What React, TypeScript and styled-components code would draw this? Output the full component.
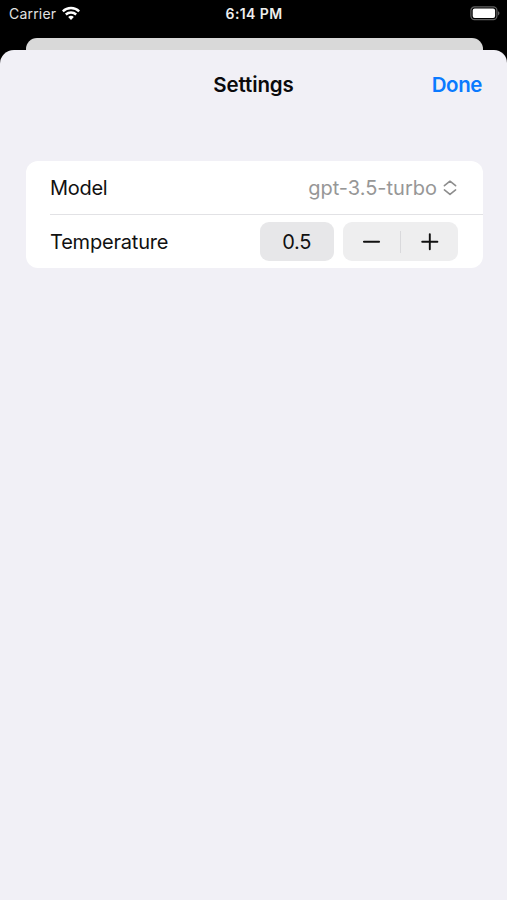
import React, { useState } from "react";
import styled, { createGlobalStyle } from "styled-components";

const GlobalStyle = createGlobalStyle`
  * { box-sizing: border-box; }
  body { margin: 0; background: #000; font-family: Inter, "Liberation Sans", sans-serif; }
  button { font: inherit; border: 0; padding: 0; margin: 0; background: none; color: inherit; letter-spacing: inherit; }
`;

const Screen = styled.main`
  height: 900px;
  display: flex;
  flex-direction: column;
  background: #000;
  overflow: hidden;
`;

const StatusBar = styled.header`
  height: 38px;
  flex: none;
  display: grid;
  grid-template-columns: 1fr auto 1fr;
  align-items: start;
  padding: 5px 7px 0 9px;
  color: #fff;
  font-size: 14px;
  line-height: 18px;
`;

const Carrier = styled.div`
  display: flex;
  gap: 5.8px;
  color: #e2e2e2;
  letter-spacing: 0.2px;
  svg { margin-top: 0.5px; }
`;

const Time = styled.div`
  font-weight: 600;
  color: #eee;
  letter-spacing: 0.4px;
  margin-right: 1px;
`;

const Battery = styled.svg`
  justify-self: end;
  margin-top: 1px;
`;

const BackSheet = styled.div`
  height: 12px;
  flex: none;
  margin: 0 24.5px 0 25.5px;
  border-radius: 11px 11px 0 0;
  background: #d9d9d9;
`;

const Sheet = styled.section`
  flex: 1;
  border-radius: 14px 13px 0 0;
  background: #f1f0f6;
`;

const NavBar = styled.div`
  height: 69px;
  display: grid;
  grid-template-columns: 1fr auto 1fr;
  align-items: center;
  padding: 0 25px;
  font-size: 20.5px;
  font-weight: 600;
`;

const Title = styled.h1`
  grid-column: 2;
  margin: 0;
  font: inherit;
  color: #0a0a0c;
  letter-spacing: -0.1px;
`;

const DoneButton = styled.button`
  justify-self: end;
  color: #0a7aff;
  letter-spacing: -0.4px;
`;

const Card = styled.div`
  height: 107px;
  margin: 42px 24px 0 25.5px;
  border-radius: 12px;
  background: #fff;
  color: #111;
  font-size: 20px;
`;

const Row = styled.div<{ $divided?: boolean }>`
  height: ${(p) => (p.$divided ? 54 : 53)}px;
  margin-left: 24.5px;
  padding-right: 25px;
  display: flex;
  align-items: center;
  justify-content: space-between;
  border-bottom: ${(p) => (p.$divided ? "1px solid #e2e2e5" : "0")};
`;

const Label = styled.span<{ $spacing: number }>`
  padding-top: 1px;
  letter-spacing: ${(p) => p.$spacing}px;
`;

const Picker = styled.button`
  display: flex;
  align-items: center;
  gap: 6px;
  color: #979797;
  svg { margin-right: 1px; }
`;

const Controls = styled.div`
  display: flex;
  gap: 9.5px;
`;

const ValueButton = styled.button`
  width: 73.5px;
  height: 39px;
  border-radius: 9px;
  background: #e7e7e9;
  letter-spacing: -0.2px;
`;

const Stepper = styled.div`
  width: 115px;
  height: 39px;
  display: grid;
  grid-template-columns: 1fr 1px 1fr;
  align-items: center;
  border-radius: 9px;
  background: #eeeeef;
`;

const StepButton = styled.button`
  height: 39px;
  display: flex;
  align-items: center;
  justify-content: center;
`;

const StepDivider = styled.span`
  height: 22px;
  background: #d9d9dc;
`;

const WifiIcon = () => (
  <svg width="18" height="15" viewBox="0 0 18 15" fill="none" stroke="#fff" strokeWidth="2.4">
    <path d="M.8 5.3C5.3.9 12.7.9 17.2 5.3" />
    <path d="M3.8 8.5C6.8 5.8 11.2 5.8 14.2 8.5" />
    <path d="M6.2 10.9C7.7 9.3 10.3 9.3 11.8 10.9L9 13.9Z" fill="#fff" stroke="none" />
  </svg>
);

const BatteryIcon = () => (
  <Battery width="30" height="15" viewBox="0 0 30 15">
    <rect x=".9" y=".9" width="26" height="12.8" rx="3.6" fill="#000" stroke="#626262" strokeWidth="1.2" />
    <rect x="2.7" y="2.6" width="22.4" height="9.4" rx="2" fill="#fff" />
    <path d="M28.2 5.2C29.8 5.8 29.8 8.8 28.2 9.4Z" fill="#777" />
  </Battery>
);

const ChevronsIcon = () => (
  <svg width="14" height="16" viewBox="0 0 14 16" fill="none" stroke="#8d8d8d" strokeWidth="1.6" strokeLinecap="round" strokeLinejoin="round">
    <path d="M1.4 5.7L7 1.2L12.6 5.7" />
    <path d="M1.4 9.9L7 14.4L12.6 9.9" />
  </svg>
);

const StepIcon = ({ plus }: { plus?: boolean }) => (
  <svg width="18" height="18" viewBox="0 0 18 18" stroke="#111" strokeWidth="1.9" strokeLinecap="round">
    <path d={plus ? "M1.2 8.7H16.4M8.8 1.1V16.3" : "M.9 8.7H16.1"} />
  </svg>
);

export default function App() {
  const [temperature, setTemperature] = useState(0.5);
  const step = (delta: number) => setTemperature((t) => Math.min(2, Math.max(0, t + delta)));

  return (
    <Screen>
      <GlobalStyle />
      <StatusBar>
        <Carrier>Carrier<WifiIcon /></Carrier>
        <Time>6:14 PM</Time>
        <BatteryIcon />
      </StatusBar>
      <BackSheet />
      <Sheet>
        <NavBar>
          <Title>Settings</Title>
          <DoneButton>Done</DoneButton>
        </NavBar>
        <Card>
          <Row $divided>
            <Label $spacing={-0.3}>Model</Label>
            <Picker><Label $spacing={0}>gpt-3.5-turbo</Label><ChevronsIcon /></Picker>
          </Row>
          <Row>
            <Label $spacing={-0.2}>Temperature</Label>
            <Controls>
              <ValueButton>{temperature.toFixed(1)}</ValueButton>
              <Stepper>
                <StepButton aria-label="Decrease temperature" onClick={() => step(-0.1)}><StepIcon /></StepButton>
                <StepDivider />
                <StepButton aria-label="Increase temperature" onClick={() => step(0.1)}><StepIcon plus /></StepButton>
              </Stepper>
            </Controls>
          </Row>
        </Card>
      </Sheet>
    </Screen>
  );
}
